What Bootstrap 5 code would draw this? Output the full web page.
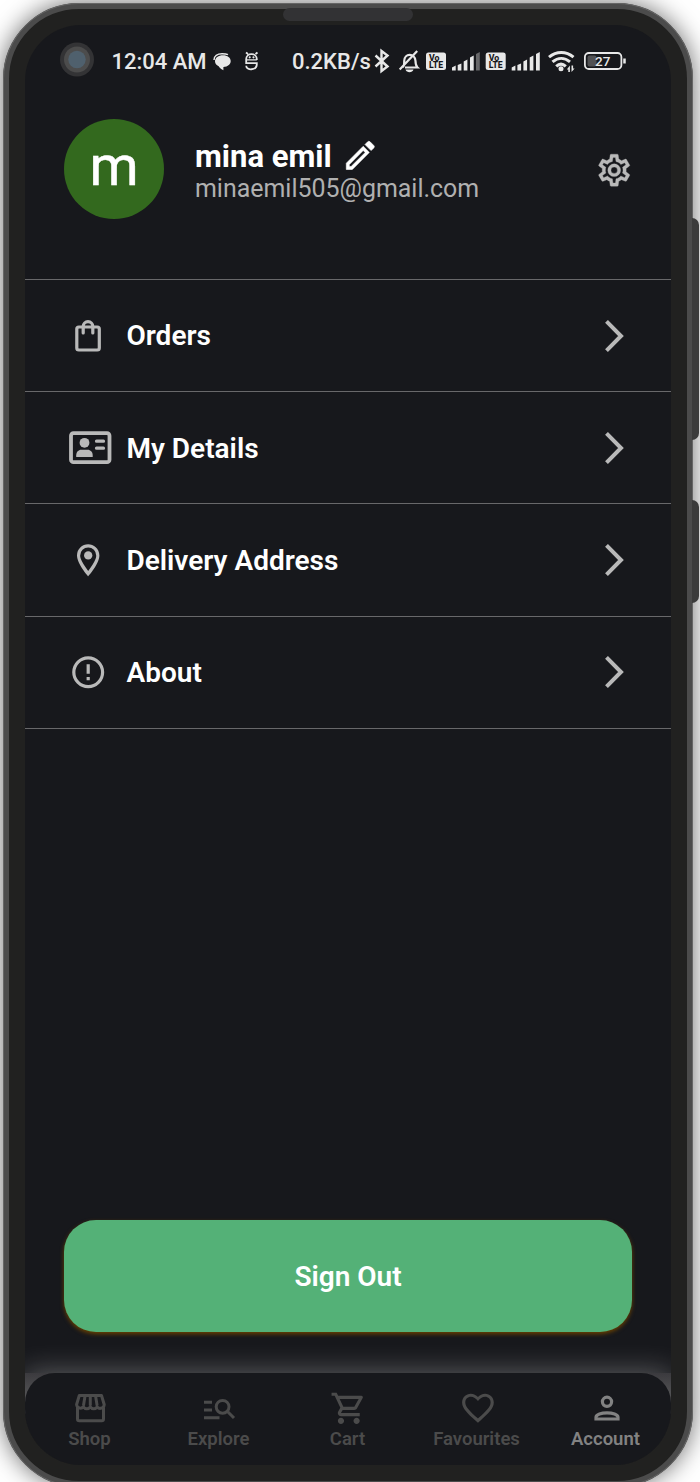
<!DOCTYPE html>
<html lang="en" data-bs-theme="dark">
<head>
<meta charset="utf-8">
<meta name="viewport" content="width=device-width, initial-scale=1">
<title>Account</title>
<link href="https://cdn.jsdelivr.net/npm/bootstrap@5.3.0/dist/css/bootstrap.min.css" rel="stylesheet">
<style>
html,body{height:1482px;overflow:hidden}
body{background:#fff;font-family:Roboto,"Liberation Sans",sans-serif;color:#fff}
svg{display:block;flex:none}
.phone{position:relative;width:690px;height:1484px;margin:3px 0 0 3px;background:#212120;border:6px solid #4b4b4b;border-radius:76px;padding:16px;box-shadow:0 0 24px rgba(0,0,0,.58)}
.phone::before{content:"";position:absolute;inset:-6px;border:1px solid #666;border-radius:76px}
.side-key{position:absolute;left:683px;width:7px;background:#3b3b3b;border-radius:0 7px 7px 0}
.key-a{top:209px;height:222px}
.key-b{top:491px;height:103px}
.speaker{position:absolute;left:274px;top:-1px;width:130px;height:13px;border-radius:7px;background:#323234}
.screen{width:646px;height:1440px;background:#17181c;border-radius:56px;overflow:hidden}
.status{height:73px;padding:17px 0 0 35px;color:#e8e8e8}
.status span{font-size:22px;line-height:24px;font-weight:500;padding-top:8px}
.profile{height:181px;padding:21.5px 38px 0 39px}
.avatar{width:100px;height:100px;margin-top:-.2px;background:#33691e;font-size:56px;font-weight:400;line-height:1;padding-bottom:7px;-webkit-text-stroke:.5px #fff}
.who{margin:20.500px 0 0 31px}
.name{font-size:31px;line-height:34px;font-weight:700}
.mail{font-size:24.950px;line-height:30px;color:#b0b0b0}
.entry{height:112.2px;border-top:1px solid #68686a;padding:0 46px 0 44px}
.entry-icon{width:42px;margin-right:15.5px}
.entry-label{font-size:28px;font-weight:600;padding-top:1.6px}
.last-line{border-top:1px solid #68686a}
.sign-out{margin:0 39px;height:112px;border-radius:32px;background:#54b177;color:#fff;font-size:28px;font-weight:600;padding-top:8px;box-shadow:0 2px 4px #6b4200}
.bar-wrap{height:92px;margin-top:41px;background:linear-gradient(#3b3a3e,#505052 20px,#565658 40px,#212120 41px);box-shadow:0 0 28px rgba(255,255,255,.33)}
.tabs{height:92px;border-radius:30px 30px 0 0;background:#17181c;color:#4b4b4b;padding-right:1px}
.tab-item{padding-top:17px;font-size:18.5px;font-weight:600;line-height:24px}
.tab-item svg{margin-bottom:1px}
.tab-item.current{color:#828282}
</style>
</head>
<body>
<div class="phone">
  <div class="side-key key-a"></div><div class="side-key key-b"></div><div class="speaker"></div>
  <div class="screen d-flex flex-column">
    <div class="status d-flex align-items-start">
      <svg width="34" height="36" viewBox="0 0 34 36"><circle cx="17" cy="17.5" r="17" fill="#333335"/><circle cx="17" cy="17.5" r="13" fill="#4c4c4c"/><circle cx="17" cy="17.5" r="8.7" fill="#4f606d"/></svg>
      <span style="width:119px;padding-left:17.5px" class="text-nowrap">12:04 AM</span>
      <svg width="48" height="40" viewBox="213 42 48 40">
        <path d="M214 60c0-4 3.400-6.300 8-6.300 2.500 0 4.500.2 6 1" fill="none" stroke="#e8e8e8" stroke-width="1.500"/>
        <path d="M223 55.200c4.600 0 7.700 2.600 7.700 5.800s-2.700 5.800-7.300 6v3.200c-2.700-1.200-4-2.400-4.700-3.900-2.400-1.200-3.700-3-3.700-5.100 0-3.400 3.400-6 8-6z" fill="#e8e8e8"/>
        <path d="M246 52.500l2 1.500M257.500 52.500l-2 1.500M256.800 60v-1c0-6.500-10.600-6.500-10.600 0v4.200h10.600v1c0 6.500-10.600 6.500-10.600 1.500" fill="none" stroke="#e8e8e8" stroke-width="1.800"/>
        <path d="M246.500 59.800h10.300" stroke="#e8e8e8" stroke-width="1.200"/>
        <circle cx="249.700" cy="57.300" r="1.100" fill="#e8e8e8"/><circle cx="253.500" cy="57.300" r="1.100" fill="#e8e8e8"/>
      </svg>
      <span style="width:82px;padding-left:31px" class="text-nowrap">0.2KB/s</span>
      <svg class="ms-auto" style="margin-right:43px" width="256" height="40" viewBox="372 42 256 40" fill="none" stroke="#e8e8e8">
        <path d="M375.500 55.500l12 11-6 4.500V51l6 4.500-12 11" stroke-width="2.400"/>
        <path d="M402.700 67c2-1.500 1.500-4 1.500-6 0-8 10.800-8.500 11.300 0 0 2.500 0 4.500 2 6.500H405M399.700 69.500l17.500-18.500" stroke-width="2.200"/><path d="M405.500 69.500h8c-1 3.500-7 3.500-8 0z" fill="#e8e8e8" stroke="none"/>
        <g fill="#e8e8e8" stroke="none">
          <rect x="426" y="52.500" width="20" height="17.500" rx="2.500"/><rect x="485.700" y="52.500" width="20" height="17.500" rx="2.500"/>
          <g fill="#17181c" font-weight="800" font-size="8.800" font-family="Roboto"><text x="429" y="60.700" textLength="10.500" lengthAdjust="spacingAndGlyphs">Vo</text><text x="429" y="68.400" textLength="14" lengthAdjust="spacingAndGlyphs">LTE</text><text x="488.700" y="60.700" textLength="10.500" lengthAdjust="spacingAndGlyphs">Vo</text><text x="488.700" y="68.400" textLength="14" lengthAdjust="spacingAndGlyphs">LTE</text></g>
          <path d="M452 67.500l3.700-2v5H452zM457.700 65l3.700-1.500v7h-3.700zM463.700 61.500l3.700-2v11h-3.700zM470 57.500l3.700-2v15H470z"/>
          <path d="M476 54l3.800-2v18.500H476z" fill="#68686a"/>
          <path d="M511.700 67.500l3.700-2v5h-3.700zM517.400 65l3.700-1.500v7h-3.700zM523.400 61.500l3.700-2v11h-3.700zM529.700 57.500l3.700-2v15h-3.700zM536 54l3.800-2v18.500H536z"/>
          <circle cx="561" cy="68.700" r="2.500"/><path d="M569.900 65.500v6.500h-1.600v-2.500h-1.500zM571.500 72v-6.500h1.600V68.500h1.500z"/>
        </g>
        <path d="M549 57.200c7.500-6.300 17-6.300 24.500 0M552.500 61.900c5.500-4.700 12-4.700 17.500 0M556.200 66.300c3-2.800 6.600-2.800 9.600 0" stroke-width="3"/>
        <rect x="584.900" y="53" width="36.500" height="16" rx="4" stroke-width="1.800"/><path d="M624.500 58.500v5" stroke-width="2.500"/>
        <rect x="587.500" y="55.500" width="9" height="11" rx="2" fill="#515153" stroke="none"/>
        <text x="602.800" y="66.200" font-size="13.500" font-weight="500" text-anchor="middle" fill="#e8e8e8" stroke="none">27</text>
      </svg>
    </div>

    <header class="profile d-flex align-items-start">
      <div class="avatar rounded-circle d-flex align-items-center justify-content-center">m</div>
      <div class="who">
        <div class="name d-flex align-items-center text-nowrap">mina emil
          <svg style="margin:-2px 0 0 12px" width="32" height="32" viewBox="0 0 32 32" fill="#fff"><path fill-rule="evenodd" d="M2.300 23.200L19.200 6.300l6.100 6.100L8.300 29.500h-6zM5.300 24.600v1.900h1.800L21.200 12.500 19.200 10.500zM21 4.500l2.700-2.700a1.700 1.700 0 0 1 2.400 0l3.700 3.700a1.700 1.700 0 0 1 0 2.400l-2.700 2.700z" stroke="#fff" stroke-width=".6"/></svg>
        </div>
        <div class="mail">minaemil505@gmail.com</div>
      </div>
      <svg class="ms-auto" style="margin-top:31px" width="38.400" height="38.400" viewBox="0 0 24 24" fill="#b9b9b9"><path d="M12,8A4,4 0 0,1 16,12A4,4 0 0,1 12,16A4,4 0 0,1 8,12A4,4 0 0,1 12,8M12,10A2,2 0 0,0 10,12A2,2 0 0,0 12,14A2,2 0 0,0 14,12A2,2 0 0,0 12,10M10,22C9.75,22 9.54,21.82 9.5,21.58L9.13,18.93C8.5,18.68 7.96,18.34 7.44,17.94L4.95,18.95C4.73,19.03 4.46,18.95 4.34,18.73L2.34,15.27C2.21,15.05 2.27,14.78 2.46,14.63L4.57,12.97L4.5,12L4.57,11L2.46,9.37C2.27,9.22 2.21,8.95 2.34,8.73L4.34,5.27C4.46,5.05 4.73,4.96 4.95,5.05L7.44,6.05C7.96,5.66 8.5,5.32 9.13,5.07L9.5,2.42C9.54,2.18 9.75,2 10,2H14C14.25,2 14.46,2.18 14.5,2.42L14.87,5.07C15.5,5.32 16.04,5.66 16.56,6.05L19.05,5.05C19.27,4.96 19.54,5.05 19.66,5.27L21.66,8.73C21.79,8.95 21.73,9.22 21.54,9.37L19.43,11L19.5,12L19.43,13L21.54,14.63C21.73,14.78 21.79,15.05 21.66,15.27L19.66,18.73C19.54,18.95 19.27,19.04 19.05,18.95L16.56,17.95C16.04,18.34 15.5,18.68 14.87,18.93L14.5,21.58C14.46,21.82 14.25,22 14,22H10M11.25,4L10.88,6.61C9.68,6.86 8.62,7.5 7.85,8.39L5.44,7.35L4.69,8.65L6.8,10.2C6.4,11.37 6.4,12.64 6.8,13.8L4.68,15.36L5.43,16.66L7.86,15.62C8.63,16.5 9.68,17.14 10.87,17.38L11.24,20H12.76L13.13,17.39C14.32,17.14 15.37,16.5 16.14,15.62L18.57,16.66L19.32,15.36L17.2,13.81C17.6,12.64 17.6,11.37 17.2,10.2L19.31,8.65L18.56,7.35L16.15,8.39C15.38,7.5 14.32,6.86 13.12,6.62L12.75,4H11.25Z" stroke="#b9b9b9" stroke-width=".2"/></svg>
    </header>

    <div class="entry d-flex align-items-center">
      <div class="entry-icon"><svg width="42" height="40" viewBox="0 0 42 40" fill="none" stroke="#b9b9b9" stroke-width="3.200"><rect x="7.800" y="11" width="22.500" height="23" rx="2"/><path d="M14.200 17v-6.500a4.800 4.800 0 0 1 9.600 0V17" stroke-linecap="round"/></svg></div>
      <div class="entry-label">Orders</div>
      <svg class="ms-auto" width="20" height="34" viewBox="0 0 20 34" fill="none" stroke="#b9b9b9" stroke-width="4"><path d="M1.500 2.400L16 17 1.500 31.600"/></svg>
    </div>
    <div class="entry d-flex align-items-center">
      <div class="entry-icon"><svg width="43" height="34" viewBox="0 0 43 34" fill="#b9b9b9"><rect x="2" y="2.200" width="38.500" height="29" rx="2.500" fill="none" stroke="#b9b9b9" stroke-width="3.800"/><circle cx="15.500" cy="11.800" r="4.900"/><path d="M7.200 26v-1.500c0-3.500 2.300-5.700 5-5.700h6.500c2.700 0 5 2.200 5 5.700V26z"/><path d="M27.500 10.200h7M27.500 17.200h7" stroke="#b9b9b9" stroke-width="3.200" stroke-linecap="round"/></svg></div>
      <div class="entry-label">My Details</div>
      <svg class="ms-auto" width="20" height="34" viewBox="0 0 20 34" fill="none" stroke="#b9b9b9" stroke-width="4"><path d="M1.500 2.400L16 17 1.500 31.600"/></svg>
    </div>
    <div class="entry d-flex align-items-center">
      <div class="entry-icon"><svg width="38.400" height="38.400" viewBox="0 0 24 24" fill="#b9b9b9"><path d="M12,2C15.31,2 19,4.670 19,9C19,14.250 12,22 12,22C12,22 5,14.250 5,9A7,7 0 0,1 12,2M12,4A5,5 0 0,0 7,9C7,10 7,12 12,18.710C17,12 17,10 17,9A5,5 0 0,0 12,4Z"/><circle cx="12" cy="9" r="2.600"/></svg></div>
      <div class="entry-label">Delivery Address</div>
      <svg class="ms-auto" width="20" height="34" viewBox="0 0 20 34" fill="none" stroke="#b9b9b9" stroke-width="4"><path d="M1.500 2.400L16 17 1.500 31.600"/></svg>
    </div>
    <div class="entry d-flex align-items-center">
      <div class="entry-icon"><svg width="38.400" height="38.400" viewBox="0 0 24 24" fill="none" stroke="#b9b9b9" stroke-width="2"><circle cx="12" cy="12" r="9"/><path d="M12 7v6M12 15v2"/></svg></div>
      <div class="entry-label">About</div>
      <svg class="ms-auto" width="20" height="34" viewBox="0 0 20 34" fill="none" stroke="#b9b9b9" stroke-width="4"><path d="M1.500 2.400L16 17 1.500 31.600"/></svg>
    </div>
    <div class="last-line"></div>

    <button class="sign-out btn border-0 mt-auto flex-shrink-0">Sign Out</button>

    <div class="bar-wrap flex-shrink-0">
      <nav class="tabs d-flex">
        <div class="tab-item d-flex flex-column align-items-center" style="flex:1 1 0">
          <svg width="36" height="36" viewBox="72.200 1390.500 36 36" fill="none" stroke="currentColor" stroke-width="3" stroke-linejoin="round"><path d="M79.500 1396h22.200l2.700 9a3.900 3.900 0 0 1-7 2.300 4 4 0 0 1-6.900 0 4 4 0 0 1-6.900 0 3.900 3.900 0 0 1-6.800-2.300zM85.300 1396l-1.600 10M90.500 1396v10M95.700 1396l1.600 10M77.700 1408v11.500a1.700 1.700 0 0 0 1.700 1.700h22.600a1.700 1.700 0 0 0 1.700-1.700V1408"/></svg>Shop</div>
        <div class="tab-item d-flex flex-column align-items-center" style="flex:1 1 0">
          <svg width="36" height="36" viewBox="201 1390 36 36" fill="none" stroke="currentColor" stroke-width="3"><path d="M204 1402.200h8M204 1410h8M204 1417.800h15.500M227.500 1411.500l6.500 6.500"/><circle cx="222.600" cy="1406.800" r="6.400"/></svg>Explore</div>
        <div class="tab-item d-flex flex-column align-items-center" style="flex:1 1 0">
          <svg width="36" height="36" viewBox="-1 -.7 23 23" fill="currentColor"><path d="M15.550 13c.75 0 1.410-.41 1.750-1.030l3.580-6.490A.996.996 0 0 0 20.010 4H5.210l-.94-2H1v2h2l3.600 7.590-1.350 2.440C4.520 15.370 5.480 17 7 17h12v-2H7l1.100-2h7.450zM6.160 6h12.150l-2.760 5H8.530L6.160 6zM7 18c-1.100 0-1.990.9-1.990 2S5.900 22 7 22s2-.9 2-2-.9-2-2-2zm10 0c-1.100 0-1.990.9-1.990 2s.89 2 1.990 2 2-.9 2-2-.9-2-2-2z" transform="translate(-1 -1)"/></svg>Cart</div>
        <div class="tab-item d-flex flex-column align-items-center" style="flex:1 1 0">
          <svg width="38" height="36" viewBox="-.6 .700 24 22.700" fill="currentColor"><path d="M16.500 3c-1.740 0-3.410.81-4.500 2.090C10.910 3.810 9.240 3 7.500 3 4.420 3 2 5.420 2 8.500c0 3.780 3.400 6.860 8.550 11.540L12 21.350l1.450-1.320C18.600 15.360 22 12.280 22 8.500 22 5.420 19.580 3 16.500 3zm-4.400 15.550l-.1.100-.1-.1C7.140 14.240 4 11.390 4 8.500 4 6.500 5.500 5 7.500 5c1.740 0 3.200 1 4.500 2.700C13.300 6 14.760 5 16.500 5c2 0 3.500 1.500 3.500 3.500 0 2.890-3.140 5.740-7.900 10.050z"/></svg>Favourites</div>
        <div class="tab-item current d-flex flex-column align-items-center" style="flex:1 1 0">
          <svg width="36" height="36" viewBox="588 1390.500 36 36" fill="none" stroke="currentColor" stroke-width="3.200"><circle cx="607" cy="1402.300" r="4.600"/><path d="M596 1419.500v-1.700c0-6 22-6 22 0v1.700z"/></svg>Account</div>
      </nav>
    </div>
  </div>
</div>
<script src="https://cdn.jsdelivr.net/npm/bootstrap@5.3.0/dist/js/bootstrap.bundle.min.js"></script>
</body>
</html>
